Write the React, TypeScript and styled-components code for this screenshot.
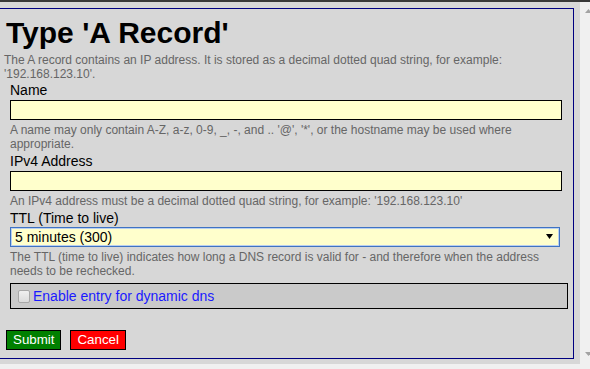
import React from "react";
import styled, { createGlobalStyle } from "styled-components";

const Global = createGlobalStyle`
  html, body { margin: 0; padding: 0; width: 590px; height: 369px; overflow: hidden; background: #f0f0f0; }
  #root { width: 590px; height: 369px; }
`;

const Frame = styled.div`
  display: flex;
  flex-direction: column;
  width: 590px;
  height: 369px;
  font-family: "Liberation Sans", Arial, sans-serif;
`;

const TopStrip = styled.div`
  flex: none;
  height: 2px;
  background: #383838;
`;

const Middle = styled.div`
  flex: none;
  display: flex;
  height: 362px;
`;

const Pane = styled.div`
  width: 580px;
  box-sizing: border-box;
  padding: 6px 6px 0 0;
  background: #d7d7d7;
`;

const Box = styled.div`
  box-sizing: border-box;
  height: 351px;
  display: flex;
  flex-direction: column;
  align-items: flex-start;
  padding: 0 0 0 4px;
  border-top: 1px solid #000080;
  border-right: 1px solid #000080;
  border-bottom: 1px solid #000080;
`;

const Title = styled.h1`
  margin: 7px 0 0 2px;
  font-size: 30px;
  line-height: 34px;
  font-weight: bold;
  color: #000;
`;

const Note = styled.div<{ $top?: number }>`
  margin-top: ${(p) => p.$top ?? 3}px;
  font-size: 12px;
  line-height: 14px;
  color: #666;
`;

const Field = styled.div`
  display: flex;
  flex-direction: column;
  margin-left: 6px;
  width: 552px;
`;

const Label = styled.label<{ $top: number }>`
  margin-top: ${(p) => p.$top}px;
  font-size: 14px;
  line-height: 16px;
  color: #000;
`;

const TextInput = styled.input`
  display: block;
  box-sizing: border-box;
  width: 552px;
  height: 20px;
  margin: 2px 0 0 0;
  padding: 0 3px;
  border: 1px solid #000;
  border-radius: 0;
  background: #ffffcc;
  font-family: inherit;
  font-size: 14px;
  outline: none;
`;

const SelectWrap = styled.div`
  position: relative;
  width: 550px;
  margin-top: 1px;
`;

const Select = styled.select`
  display: block;
  box-sizing: border-box;
  width: 550px;
  height: 20px;
  margin: 0;
  padding: 0 0 0 4px;
  border: 1px solid #3f73c2;
  box-shadow: inset 0 0 0 1px #b9cff0;
  border-radius: 0;
  background: #ffffcc;
  appearance: none;
  -webkit-appearance: none;
  font-family: inherit;
  font-size: 14px;
  color: #000;
  outline: none;
`;

const Arrow = styled.svg`
  position: absolute;
  right: 7px;
  top: 7px;
  pointer-events: none;
`;

const Dyn = styled.div`
  box-sizing: border-box;
  display: flex;
  align-items: center;
  gap: 3px;
  width: 558px;
  height: 26px;
  margin-top: 5px;
  padding-left: 7px;
  border: 1px solid #000;
  background: #cacaca;
`;

const Check = styled.input`
  appearance: none;
  -webkit-appearance: none;
  box-sizing: border-box;
  width: 12px;
  height: 13px;
  margin: 0;
  border: 1px solid #a8a8a8;
  border-radius: 2px;
  background: linear-gradient(#f0f0f0, #dcdcdc);
`;

const DynLabel = styled.label`
  font-size: 14px;
  line-height: 16px;
  color: #1a1aff;
`;

const Buttons = styled.div`
  display: flex;
  gap: 9px;
  margin: 21px 0 0 2px;
`;

const Btn = styled.button<{ $bg: string }>`
  box-sizing: border-box;
  height: 20px;
  padding: 0 6px;
  border: 1px solid #000;
  border-radius: 0;
  background: ${(p) => p.$bg};
  color: #fff;
  font-family: "Liberation Sans", Arial, sans-serif;
  font-size: 13.333px;
  line-height: 16px;
`;

const Scrollbar = styled.div`
  width: 10px;
  box-sizing: border-box;
  display: flex;
  flex-direction: column;
  justify-content: space-between;
  align-items: flex-start;
  padding: 7px 0 8px 5px;
  background: #f0f0f0;
`;

const BottomStrip = styled.div`
  flex: none;
  height: 5px;
  background: #f0f0f0;
`;

export default function App() {
  return (
    <Frame>
      <Global />
      <TopStrip />
      <Middle>
        <Pane>
          <Box>
            <Title>Type 'A Record'</Title>
            <Note>
              The A record contains an IP address. It is stored as a decimal dotted quad string, for example:
              '192.168.123.10'.
            </Note>
            <Field>
              <Label $top={1}>Name</Label>
              <TextInput type="text" />
              <Note>
                A name may only contain A-Z, a-z, 0-9, _, -, and .. '@', '*', or the hostname may be used where
                appropriate.
              </Note>
              <Label $top={2}>IPv4 Address</Label>
              <TextInput type="text" />
              <Note>An IPv4 address must be a decimal dotted quad string, for example: '192.168.123.10'</Note>
              <Label $top={2}>TTL (Time to live)</Label>
              <SelectWrap>
                <Select defaultValue="300">
                  <option value="300">5 minutes (300)</option>
                </Select>
                <Arrow width="7" height="5" viewBox="0 0 7 5">
                  <path d="M0 0H7L3.5 5Z" fill="#000" />
                </Arrow>
              </SelectWrap>
              <Note>
                The TTL (time to live) indicates how long a DNS record is valid for - and therefore when the address
                needs to be rechecked.
              </Note>
              <Dyn>
                <Check type="checkbox" id="dyn" />
                <DynLabel htmlFor="dyn">Enable entry for dynamic dns</DynLabel>
              </Dyn>
            </Field>
            <Buttons>
              <Btn $bg="#008000">Submit</Btn>
              <Btn $bg="#ff0000">Cancel</Btn>
            </Buttons>
          </Box>
        </Pane>
        <Scrollbar>
          <svg width="7" height="4" viewBox="0 0 7 4">
            <path d="M3.5 0L7 4H0Z" fill="#a3a3a3" />
          </svg>
          <svg width="7" height="4" viewBox="0 0 7 4">
            <path d="M0 0H7L3.5 4Z" fill="#a3a3a3" />
          </svg>
        </Scrollbar>
      </Middle>
      <BottomStrip />
    </Frame>
  );
}
